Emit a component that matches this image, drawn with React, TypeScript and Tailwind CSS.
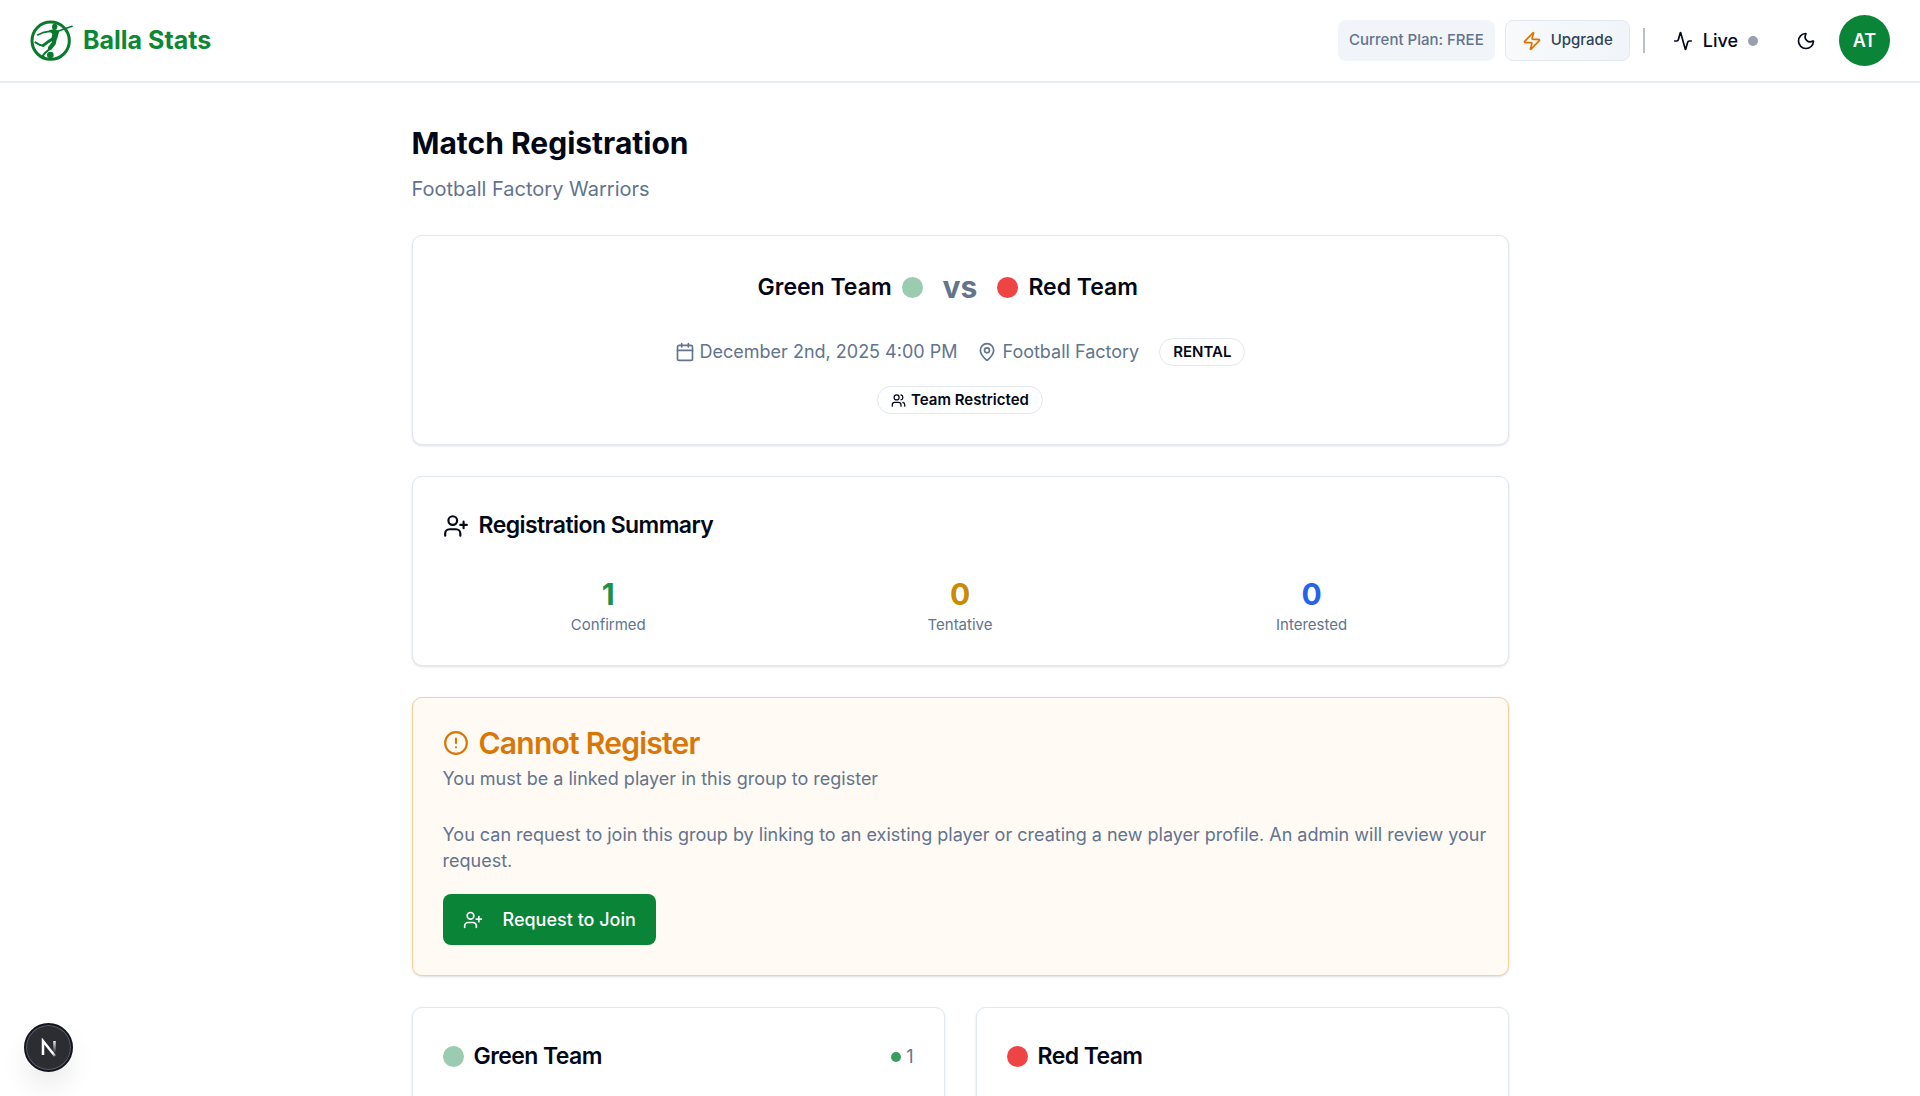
import type { ReactNode } from "react";
import { Activity, Calendar, CircleAlert, MapPin, Moon, UserPlus, Users, Zap } from "lucide-react";
import clsx from "clsx";

const SUMMARY = [
  { label: "Confirmed", count: 1, color: "text-[#1e9148]" },
  { label: "Tentative", count: 0, color: "text-[#ca8a04]" },
  { label: "Interested", count: 0, color: "text-[#2563eb]" },
];

const TEAMS = [
  { name: "Green Team", dot: "bg-[#9bcbb0]", confirmed: 1 },
  { name: "Red Team", dot: "bg-[#ef4444]", confirmed: 0 },
];

function Logo() {
  return (
    <svg viewBox="30 30 123 123" className="size-[41px] overflow-visible" fill="none" aria-hidden="true">
      <circle cx="92" cy="92" r="56" stroke="#087a2c" strokeWidth="9" />
      <g stroke="#087a2c" strokeLinecap="round" strokeLinejoin="round">
        <path d="M53 75 L68 68 L84 65 L98 64" strokeWidth="5" />
        <path d="M110 65 L130 58 L156 49" strokeWidth="5" />
        <path d="M104 84 L101 100 L90 114" strokeWidth="13" />
        <path d="M88 118 L74 130 L67 139 L74 143" strokeWidth="6" />
        <path d="M96 88 L82 97 L70 106" strokeWidth="9" />
        <path d="M70 107 L58 104 L46 97" strokeWidth="6" />
      </g>
      <path d="M86 61 L103 57 L118 63 L111 88 L93 91 L97 72 Z" fill="#087a2c" />
      <ellipse cx="104" cy="50" rx="8" ry="9" fill="#087a2c" />
      <circle cx="91" cy="135" r="10" fill="#087a2c" />
    </svg>
  );
}

function Header() {
  return (
    <header className="flex items-center justify-between border-b-2 border-[#e8edf3] px-[30px] py-[15px]">
      <a href="#" className="flex items-center gap-[12px]">
        <Logo />
        <span className="text-[25px] font-bold text-[#0b8738]">Balla Stats</span>
      </a>
      <div className="flex items-center gap-[10px]">
        <span className="flex h-[41px] items-center rounded-lg bg-slate-100 px-[11px] text-[15px] font-medium text-slate-500">
          Current Plan: FREE
        </span>
        <button className="flex h-[41px] items-center gap-[9px] rounded-lg border border-slate-200 bg-gradient-to-r from-slate-50 to-slate-100 px-[16px] text-[15px] font-medium text-slate-700">
          <Zap size={20} className="text-[#d97706]" />
          Upgrade
        </button>
        <div className="mx-[3px] h-[25px] w-[2px] bg-[#b9c0c9]" />
        <button className="flex items-center gap-[10px] px-[15px] text-[18px] font-medium">
          <Activity size={20} />
          Live
          <span className="size-[10px] rounded-full bg-gray-400" />
        </button>
        <button aria-label="Toggle theme" className="px-[13px]">
          <Moon size={20} />
        </button>
        <button className="size-[51px] rounded-full bg-[#0a8537] text-[18px] font-semibold text-white">AT</button>
      </div>
    </header>
  );
}

function Card({ className, children }: { className?: string; children: ReactNode }) {
  return (
    <section className={clsx("rounded-[10px] border p-[30px] shadow-sm", className ?? "border-slate-200 bg-white")}>
      {children}
    </section>
  );
}

function Badge({ children }: { children: ReactNode }) {
  return (
    <span className="flex h-[28px] items-center gap-[5px] rounded-full border border-slate-200 px-[13px] text-[15px] font-semibold text-[#020817]">
      {children}
    </span>
  );
}

function Dot({ color }: { color: string }) {
  return <span className={"size-[21px] shrink-0 rounded-full " + color} />;
}

function MatchCard() {
  return (
    <Card>
      <div className="grid grid-cols-[1fr_auto_1fr] items-center gap-[20px] text-[23px] leading-[36px] font-semibold">
        <div className="flex items-center justify-end gap-[10px]">
          Green Team
          <Dot color="bg-[#9bcbb0]" />
        </div>
        <span className="text-[30px] leading-[42px] font-bold text-slate-500">vs</span>
        <div className="flex items-center gap-[10px]">
          <Dot color="bg-[#ef4444]" />
          Red Team
        </div>
      </div>
      <div className="mt-[30px] flex flex-wrap items-center justify-center gap-[20px] text-[18px] leading-[26px] text-slate-500">
        <span className="flex items-center gap-[5px]">
          <Calendar size={20} />
          December 2nd, 2025 4:00 PM
        </span>
        <span className="flex items-center gap-[5px]">
          <MapPin size={20} />
          Football Factory
        </span>
        <Badge>RENTAL</Badge>
      </div>
      <div className="mt-[20px] flex justify-center">
        <Badge>
          <Users size={15} />
          Team Restricted
        </Badge>
      </div>
    </Card>
  );
}

function SummaryCard() {
  return (
    <Card>
      <h2 className="flex items-center gap-[10px] text-[23px] leading-[37px] font-semibold tracking-tight">
        <UserPlus size={26} />
        Registration Summary
      </h2>
      <div className="mt-[30px] grid grid-cols-3 gap-[20px] text-center">
        {SUMMARY.map((s) => (
          <div key={s.label}>
            <div className={"text-[30px] leading-[41px] font-bold " + s.color}>{s.count}</div>
            <div className="text-[15px] leading-[20px] text-slate-500">{s.label}</div>
          </div>
        ))}
      </div>
    </Card>
  );
}

function CannotRegisterCard() {
  return (
    <Card className="border-[#fbcf96] bg-[#fffaf4]">
      <h2 className="flex items-center gap-[10px] text-[30px] leading-[30px] font-semibold tracking-tight text-[#d97706]">
        <CircleAlert size={26} />
        Cannot Register
      </h2>
      <p className="mt-[8px] text-[18px] leading-[26px] text-slate-500">
        You must be a linked player in this group to register
      </p>
      <p className="-mr-[15px] mt-[30px] text-[18px] leading-[26px] text-slate-500">
        You can request to join this group by linking to an existing player or creating a new player profile. An
        admin will review your request.
      </p>
      <button className="mt-[20px] flex h-[51px] items-center gap-[20px] rounded-lg bg-[#0a8537] px-[20px] text-[18px] font-medium text-white">
        <UserPlus size={20} />
        Request to Join
      </button>
    </Card>
  );
}

function DevIndicator() {
  return (
    <button
      aria-label="Open dev tools"
      className="fixed bottom-[24px] left-[24px] flex size-[49px] items-center justify-center rounded-full border-2 border-[#14161f] bg-[#2b2d33] shadow-[inset_0_0_0_1px_#5b5e66,0_16px_32px_-8px_rgba(0,0,0,0.16)]"
    >
      <svg width="20" height="20" viewBox="0 0 20 20" fill="none">
        <defs>
          <linearGradient id="diag" x1="9" y1="9" x2="17" y2="19" gradientUnits="userSpaceOnUse">
            <stop stopColor="#fff" />
            <stop offset="0.6" stopColor="#fff" />
            <stop offset="1" stopColor="#fff" stopOpacity="0.2" />
          </linearGradient>
          <linearGradient id="stem" x1="15" y1="2" x2="15" y2="15" gradientUnits="userSpaceOnUse">
            <stop stopColor="#fff" />
            <stop offset="1" stopColor="#fff" stopOpacity="0" />
          </linearGradient>
        </defs>
        <path d="M4 17V3L16 18" stroke="url(#diag)" strokeWidth="2.500" />
        <path d="M15.500 3V15" stroke="url(#stem)" strokeWidth="2.500" />
      </svg>
    </button>
  );
}

export default function App() {
  return (
    <div className="h-screen overflow-y-auto bg-white font-['Inter',sans-serif] text-[#020817] [scrollbar-width:none]">
      <Header />
      <main className="mx-auto max-w-[1137px] px-[20px] pt-[40px]">
        <h1 className="text-[30px] leading-[41px] font-bold">Match Registration</h1>
        <p className="mt-[10px] text-[20px] leading-[30px] text-slate-500">Football Factory Warriors</p>
        <div className="mt-[31px] flex flex-col gap-[31px]">
          <MatchCard />
          <SummaryCard />
          <CannotRegisterCard />
          <div className="grid grid-cols-2 gap-[31px]">
            {TEAMS.map((t) => (
              <Card key={t.name}>
                <div className="flex items-center justify-between">
                  <h2 className="flex items-center gap-[10px] text-[23px] leading-[37px] font-semibold tracking-tight">
                    <Dot color={t.dot} />
                    {t.name}
                  </h2>
                  {t.confirmed > 0 && (
                    <span className="flex items-center gap-[5px] text-[18px] text-slate-500">
                      <span className="size-[10px] rounded-full bg-[#3a9d60]" />
                      {t.confirmed}
                    </span>
                  )}
                </div>
              </Card>
            ))}
          </div>
        </div>
      </main>
      <DevIndicator />
    </div>
  );
}
